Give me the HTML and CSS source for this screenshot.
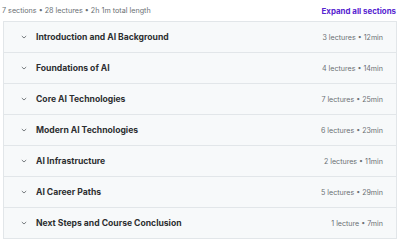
FILE: index.html
```html
<!DOCTYPE html>
<html lang="en">
  <head>
    <meta charset="UTF-8" />
    <meta name="viewport" content="width=device-width, initial-scale=1.0" />
    <title>Course content</title>
    <link rel="stylesheet" href="styles.css">
  </head>
  <body>
    <div class="curriculum">
      <div class="curriculum-header">
        <span class="summary">7 sections • 28 lectures • 2h 1m total length</span>
        <button class="expand-btn">Expand all sections</button>
      </div>
      <div class="sections">
        <div class="section-row">
          <svg class="chevron" viewBox="0 0 10 10"><path d="M2.8 4 L5 6 L7.2 4" /></svg>
          <span class="section-title">Introduction and AI Background</span>
          <span class="section-meta">3 lectures • 12min</span>
        </div>
        <div class="section-row">
          <svg class="chevron" viewBox="0 0 10 10"><path d="M2.8 4 L5 6 L7.2 4" /></svg>
          <span class="section-title">Foundations of AI</span>
          <span class="section-meta">4 lectures • 14min</span>
        </div>
        <div class="section-row">
          <svg class="chevron" viewBox="0 0 10 10"><path d="M2.8 4 L5 6 L7.2 4" /></svg>
          <span class="section-title">Core AI Technologies</span>
          <span class="section-meta">7 lectures • 25min</span>
        </div>
        <div class="section-row">
          <svg class="chevron" viewBox="0 0 10 10"><path d="M2.8 4 L5 6 L7.2 4" /></svg>
          <span class="section-title">Modern AI Technologies</span>
          <span class="section-meta">6 lectures • 23min</span>
        </div>
        <div class="section-row">
          <svg class="chevron" viewBox="0 0 10 10"><path d="M2.8 4 L5 6 L7.2 4" /></svg>
          <span class="section-title">AI Infrastructure</span>
          <span class="section-meta">2 lectures • 11min</span>
        </div>
        <div class="section-row">
          <svg class="chevron" viewBox="0 0 10 10"><path d="M2.8 4 L5 6 L7.2 4" /></svg>
          <span class="section-title">AI Career Paths</span>
          <span class="section-meta">5 lectures • 29min</span>
        </div>
        <div class="section-row">
          <svg class="chevron" viewBox="0 0 10 10"><path d="M2.8 4 L5 6 L7.2 4" /></svg>
          <span class="section-title">Next Steps and Course Conclusion</span>
          <span class="section-meta">1 lecture • 7min</span>
        </div>
      </div>
    </div>
  </body>
</html>
```

FILE: styles.css
```css
body {
  margin: 0;
  font-family: Inter, "Noto Sans", sans-serif;
  background-color: #fff;
  color: #2d2f31;
}

.curriculum {
  padding: 0 3px;
}

/* Header with summary and expand link */
.curriculum-header {
  display: flex;
  align-items: center;
  justify-content: space-between;
  height: 21px;
  padding-right: 1px;
}

.summary {
  font-size: 7.2px;
  color: #6a6f73;
  margin-left: -1px;
}

.expand-btn {
  border: none;
  background: none;
  padding: 0;
  font-family: inherit;
  font-size: 7.9px;
  font-weight: 700;
  color: #5624d0;
}

/* Section rows */
.sections {
  border: 1px solid #e2e6e9;
  border-bottom: none;
}

.section-row {
  display: flex;
  align-items: center;
  height: 30px;
  background-color: #f7f9fa;
  border-bottom: 1px solid #e2e6e9;
  padding: 0 13px 0 15px;
}

.chevron {
  width: 10px;
  height: 10px;
  fill: none;
  stroke: #6a6f73;
  stroke-width: 0.9;
  margin-right: 7px;
}

.section-title {
  flex: 1;
  font-size: 8.6px;
  font-weight: 700;
}

.section-meta {
  font-size: 7.1px;
  color: #6a6f73;
}
```
